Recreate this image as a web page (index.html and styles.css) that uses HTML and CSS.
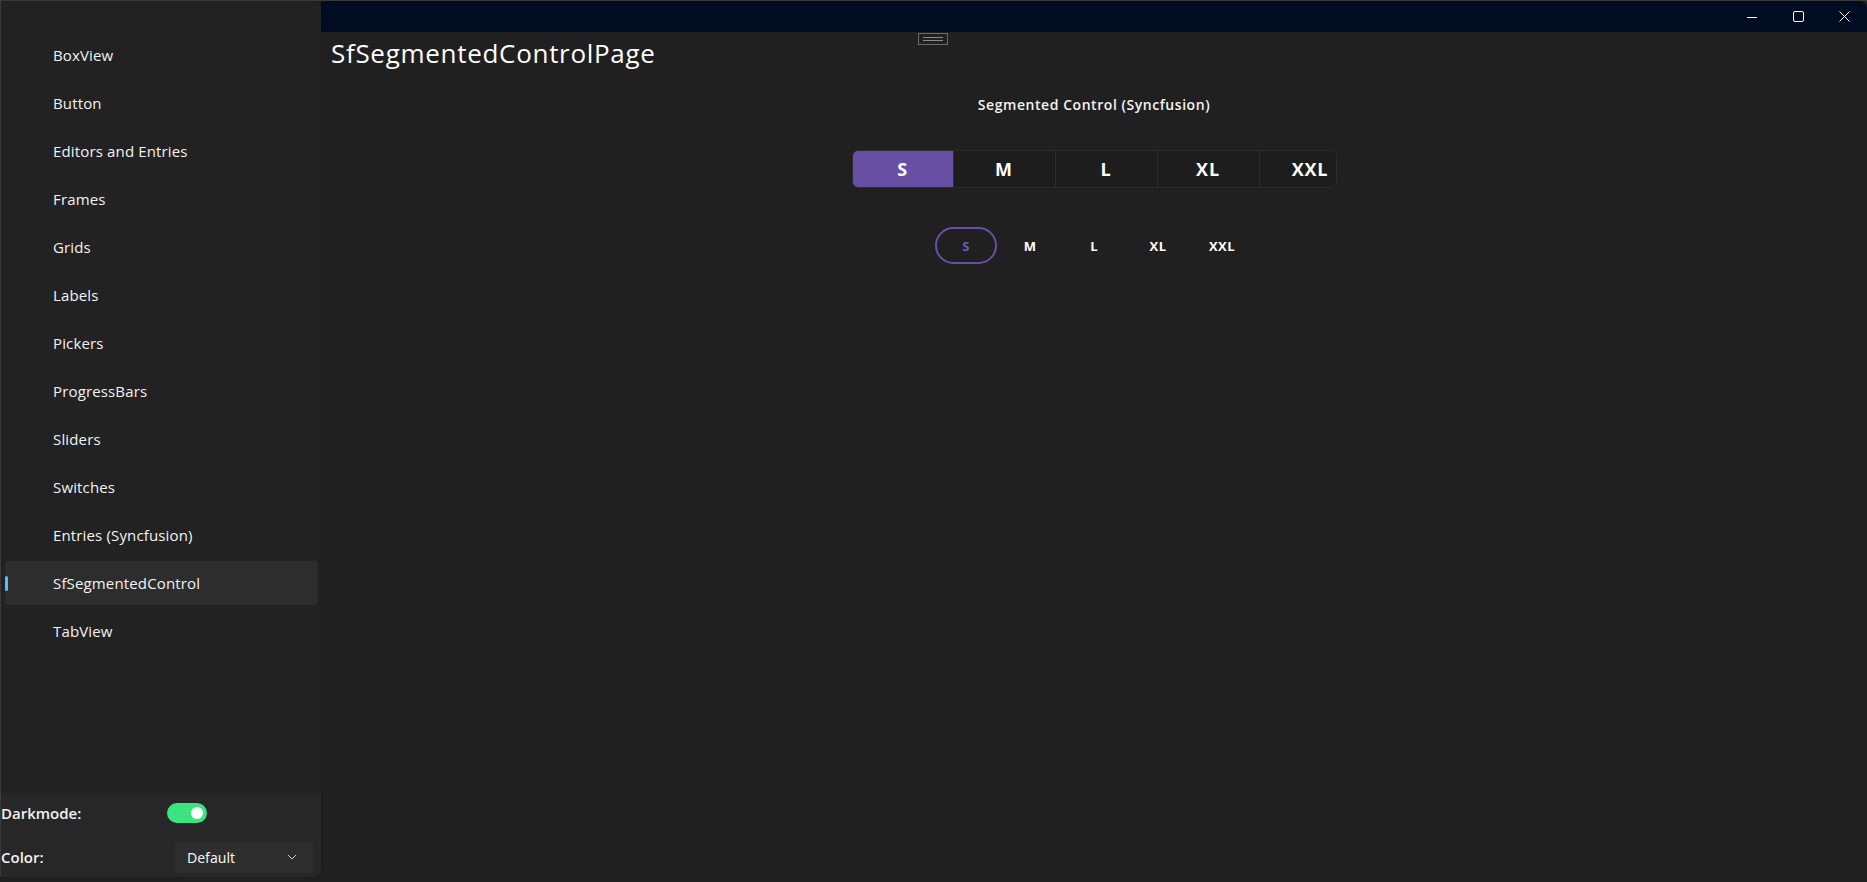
FILE: index.html
```html
<!DOCTYPE html>
<html lang="en">
<head>
<meta charset="utf-8">
<title>SfSegmentedControlPage</title>
<link rel="stylesheet" href="styles.css">
</head>
<body>
<div class="window">
  <aside class="sidebar">
    <nav class="nav">
      <div class="nav-item">BoxView</div>
      <div class="nav-item">Button</div>
      <div class="nav-item">Editors and Entries</div>
      <div class="nav-item">Frames</div>
      <div class="nav-item">Grids</div>
      <div class="nav-item">Labels</div>
      <div class="nav-item">Pickers</div>
      <div class="nav-item">ProgressBars</div>
      <div class="nav-item">Sliders</div>
      <div class="nav-item">Switches</div>
      <div class="nav-item">Entries (Syncfusion)</div>
      <div class="nav-item selected"><span class="indicator"></span>SfSegmentedControl</div>
      <div class="nav-item">TabView</div>
    </nav>
    <div class="settings">
      <div class="setting">
        <span class="setting-label label-dark">Darkmode:</span>
        <span class="toggle"><span class="knob"></span></span>
      </div>
      <div class="setting">
        <span class="setting-label label-color">Color:</span>
        <span class="dropdown">
          <span class="dropdown-text">Default</span>
          <svg class="chevron" width="10" height="6" viewBox="0 0 10 6"><path d="M1 1 L5 5 L9 1" fill="none" stroke="#cfcfcf" stroke-width="1"/></svg>
        </span>
      </div>
    </div>
  </aside>
  <main class="main">
    <header class="titlebar">
      <div class="caption-btn">
        <svg width="10" height="10" viewBox="0 0 10 10"><path d="M0 5.5 H10" stroke="#fff" stroke-width="1"/></svg>
      </div>
      <div class="caption-btn">
        <svg width="11" height="11" viewBox="0 0 11 11"><rect x="0.5" y="0.5" width="10" height="10" rx="1.5" fill="none" stroke="#fff" stroke-width="1"/></svg>
      </div>
      <div class="caption-btn">
        <svg width="11" height="11" viewBox="0 0 11 11"><path d="M0.5 0.5 L10.5 10.5 M10.5 0.5 L0.5 10.5" stroke="#fff" stroke-width="1"/></svg>
      </div>
    </header>
    <section class="content">
      <h1 class="page-title">SfSegmentedControlPage</h1>
      <div class="center-col">
        <div class="subtitle">Segmented Control (Syncfusion)</div>
        <div class="segmented">
          <div class="seg active">S</div>
          <div class="seg">M</div>
          <div class="seg">L</div>
          <div class="seg">XL</div>
          <div class="seg">XXL</div>
        </div>
        <div class="pills">
          <div class="pill active">S</div>
          <div class="pill">M</div>
          <div class="pill">L</div>
          <div class="pill">XL</div>
          <div class="pill">XXL</div>
        </div>
      </div>
    </section>
  </main>
  <div class="handle"><span></span><span></span></div>
</div>
</body>
</html>
```
FILE: styles.css
```css
* { box-sizing: border-box; }
html, body { margin: 0; padding: 0; }
body {
  background: #202020;
  color: #ffffff;
  font-family: "Open Sans", "Noto Sans", sans-serif;
  overflow: hidden;
}
.window {
  position: relative;
  display: flex;
  width: 1867px;
  height: 882px;
  background: #202020;
  border-top: 1px solid #3a3a3a;
}

/* Sidebar */
.sidebar {
  width: 321px;
  height: 876px;
  flex: none;
  display: flex;
  flex-direction: column;
  background: #222222;
  border-left: 1px solid #3a3a3a;
  border-top-right-radius: 8px;
  border-bottom-right-radius: 8px;
  box-shadow: 1px 0 0 #1a1a1a;
  overflow: hidden;
}
.nav {
  flex: 1;
  display: flex;
  flex-direction: column;
  gap: 4px;
  padding: 32px 3px 0 4px;
}
.nav-item {
  position: relative;
  height: 44px;
  display: flex;
  align-items: center;
  padding-left: 48px;
  font-size: 15px;
  color: #f2f2f2;
  border-radius: 4px;
  letter-spacing: 0.15px;
}
.nav-item.selected { background: #2d2d2d; }
.indicator {
  position: absolute;
  left: 0;
  top: 15px;
  width: 3px;
  height: 15px;
  border-radius: 2px;
  background: #4cc2ff;
}
.settings {
  height: 84px;
  background: #272727;
  padding-top: 10px;
  display: flex;
  flex-direction: column;
  gap: 18px;
}
.setting {
  display: flex;
  align-items: center;
  padding-left: 0;
}
.setting-label {
  font-size: 15px;
  font-weight: 600;
  color: #f2f2f2;
}
.label-dark { width: 166px; }
.label-color { width: 174px; }
.toggle {
  width: 40px;
  height: 20px;
  border-radius: 10px;
  background: #3be480;
  display: flex;
  align-items: center;
  justify-content: flex-end;
  padding-right: 4px;
}
.knob {
  width: 12px;
  height: 12px;
  border-radius: 50%;
  background: #ffffff;
}
.dropdown {
  width: 138px;
  height: 32px;
  border-radius: 4px;
  background: #2d2d2d;
  display: flex;
  align-items: center;
  justify-content: space-between;
  padding: 0 16px 0 12px;
}
.dropdown-text {
  font-family: "Noto Sans", "Open Sans", sans-serif;
  font-size: 14px;
  color: #f2f2f2;
}

/* Main */
.main {
  flex: 1;
  display: flex;
  flex-direction: column;
  min-width: 0;
}
.titlebar {
  height: 31px;
  background: #000c21;
  display: flex;
  justify-content: flex-end;
  border-top-right-radius: 8px;
}
.caption-btn {
  width: 46px;
  height: 31px;
  display: flex;
  align-items: center;
  justify-content: center;
}
.content {
  flex: 1;
  display: flex;
  flex-direction: column;
}
.page-title {
  margin: 0;
  padding: 4px 0 0 10px;
  height: 38px;
  line-height: 34px;
  font-size: 26px;
  font-weight: 400;
  letter-spacing: 0.7px;
  font-family: "Open Sans", "Noto Sans", sans-serif;
  color: #ffffff;
}
.center-col {
  display: flex;
  flex-direction: column;
  align-items: center;
}
.subtitle {
  margin-top: 25px;
  height: 20px;
  line-height: 20px;
  font-size: 14px;
  font-weight: 600;
  color: #f2f2f2;
  letter-spacing: 0.55px;
}
.segmented {
  margin-top: 35px;
  width: 485px;
  height: 38px;
  display: flex;
  border: 1px solid #2c2c2c;
  border-radius: 6px;
  background: #1d1d1d;
  overflow: hidden;
}
.seg {
  flex: none;
  width: 102px;
  display: flex;
  align-items: center;
  justify-content: center;
  border-right: 1px solid #2c2c2c;
  font-size: 18px;
  font-weight: 700;
  letter-spacing: 0.8px;
  color: #ffffff;
}
.seg.active {
  width: 101px;
  background: #6750a4;
  border-right-color: #2c2c2c;
}
.pills {
  margin-top: 39px;
  display: flex;
  height: 37px;
}
.pill {
  width: 64px;
  height: 37px;
  display: flex;
  align-items: center;
  justify-content: center;
  font-size: 13px;
  font-weight: 700;
  letter-spacing: 0.4px;
  color: #ffffff;
}
.pill.active {
  width: 62px;
  margin: 0 1px;
  border: 2px solid #6750a4;
  border-radius: 19px;
  color: #6f58b0;
}
.handle {
  position: absolute;
  left: 918px;
  top: 32px;
  width: 30px;
  height: 12px;
  border: 1px solid #6a6a6a;
  display: flex;
  flex-direction: column;
  justify-content: center;
  align-items: center;
  gap: 2px;
}
.handle span {
  display: block;
  width: 20px;
  height: 1px;
  background: #8a8a8a;
}
```
